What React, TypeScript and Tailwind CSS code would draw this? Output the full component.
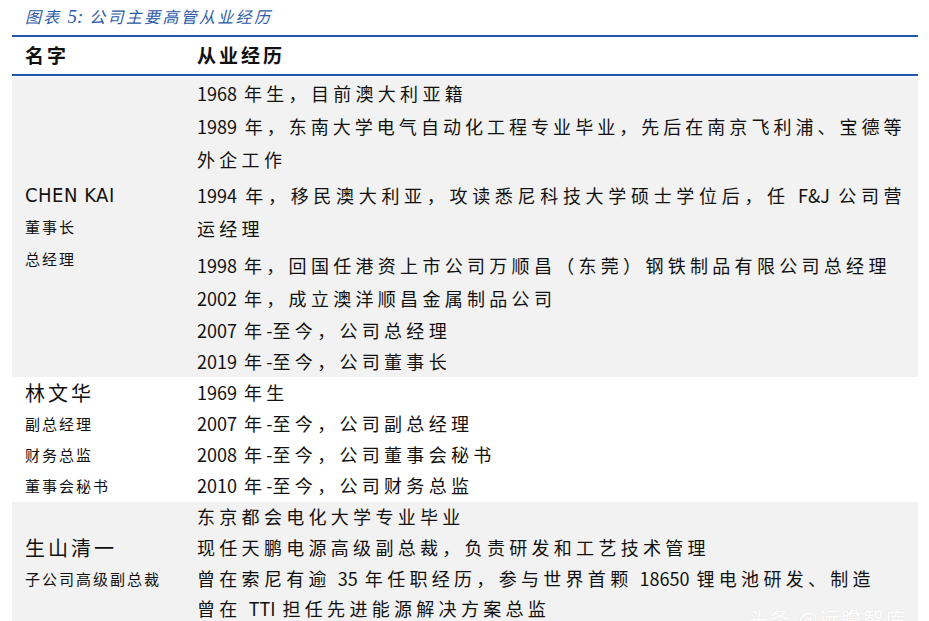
import React from 'react';

// 中英混排：中文字间距加宽，ASCII 段保持正常间距
function Mixed({ text }: { text: string }) {
  const parts = text.split(/([\x20-\x7E]+)/);
  return (
    <>
      {parts.map((p, i) =>
        /^[\x20-\x7E]+$/.test(p) ? (
          <span key={i} className="tracking-normal [word-spacing:3px]">
            {p}
          </span>
        ) : (
          <React.Fragment key={i}>{p}</React.Fragment>
        )
      )}
    </>
  );
}

// 两端对齐的折行首行
function Full({ text }: { text: string }) {
  return (
    <div className="w-[708px] whitespace-nowrap text-justify tracking-[3.4px] [text-align-last:justify]">
      <Mixed text={text} />
    </div>
  );
}

function Line({ text, className = '' }: { text: string; className?: string }) {
  return (
    <div className={`whitespace-nowrap ${className}`}>
      <Mixed text={text} />
    </div>
  );
}

export default function App() {
  return (
    <div className="relative h-[621px] w-[929px] overflow-hidden bg-white font-['Noto_Sans_CJK_SC',sans-serif] text-[#111]">
      {/* 标题 */}
      <div className="h-[35px] pl-[25px] pt-[4px] text-[16px] leading-[24px] italic tracking-[2.3px] text-[#2d5ba8]">
        图表 <span className="tracking-normal font-['Liberation_Serif',serif] text-[19px]">5:</span> 公司主要高管从业经历
      </div>

      <div className="mx-[12px] w-[906px]">
        <div className="border-t-2 border-[#2356ad]" />
        <div className="flex h-[37px] items-center text-[19px] font-bold tracking-[3px]">
          <div className="w-[185px] pl-[13px]">名字</div>
          <div>从业经历</div>
        </div>
        <div className="border-t-2 border-[#2356ad]" />

        {/* CHEN KAI */}
        <div className="mt-[1px] flex bg-[#f2f2f2] text-[18px] tracking-[4.3px]">
          <div className="flex w-[185px] flex-col justify-center pl-[13px]">
            <div className="font-['Liberation_Sans_Narrow','DejaVu_Sans_Condensed',sans-serif] text-[20px] leading-[32px] tracking-[0.5px]">
              CHEN KAI
            </div>
            <div className="text-[15px] leading-[32px] tracking-[2px]">董事长</div>
            <div className="text-[15px] leading-[32px] tracking-[2px]">总经理</div>
          </div>
          <div className="flex-1">
            <div className="leading-[33px]">
              <Line text="1968 年生，目前澳大利亚籍" />
            </div>
            <div className="leading-[33px]">
              <Full text="1989 年，东南大学电气自动化工程专业毕业，先后在南京飞利浦、宝德等" />
              <Line text="外企工作" />
            </div>
            <div className="mt-[3px] leading-[33px]">
              <Full text="1994 年，移民澳大利亚，攻读悉尼科技大学硕士学位后，任 F&J 公司营" />
              <Line text="运经理" />
            </div>
            <div className="mt-[4px] leading-[33px]">
              <Line text="1998 年，回国任港资上市公司万顺昌（东莞）钢铁制品有限公司总经理" />
            </div>
            <div className="leading-[33px]">
              <Line text="2002 年，成立澳洋顺昌金属制品公司" />
            </div>
            <Line className="leading-[31px]" text="2007 年-至今，公司总经理" />
            <Line className="leading-[31px]" text="2019 年-至今，公司董事长" />
          </div>
        </div>

        {/* 林文华 */}
        <div className="flex text-[18px] leading-[31px] tracking-[4.3px]">
          <div className="w-[185px] pl-[13px]">
            <div className="text-[20px] tracking-[3px]">林文华</div>
            <div className="text-[15px] tracking-[2px]">副总经理</div>
            <div className="text-[15px] tracking-[2px]">财务总监</div>
            <div className="text-[15px] tracking-[2px]">董事会秘书</div>
          </div>
          <div className="flex-1">
            <Line text="1969 年生" />
            <Line text="2007 年-至今，公司副总经理" />
            <Line text="2008 年-至今，公司董事会秘书" />
            <Line text="2010 年-至今，公司财务总监" />
          </div>
        </div>

        {/* 生山清一 */}
        <div className="mt-[1px] flex bg-[#f2f2f2] pb-[12px] text-[18px] leading-[31px] tracking-[4.3px]">
          <div className="w-[185px] pl-[13px] pt-[30px]">
            <div className="text-[20px] tracking-[3px]">生山清一</div>
            <div className="text-[15px] tracking-[2px]">子公司高级副总裁</div>
          </div>
          <div className="-mt-[1px] flex-1">
            <Line text="东京都会电化大学专业毕业" />
            <Line text="现任天鹏电源高级副总裁，负责研发和工艺技术管理" />
            <Line text="曾在索尼有逾 35 年任职经历，参与世界首颗 18650 锂电池研发、制造" />
            <Line className="leading-[29px]" text="曾在 TTI 担任先进能源解决方案总监" />
          </div>
        </div>
      </div>

      {/* 水印 */}
      <div className="absolute bottom-[-13px] left-[748px] whitespace-nowrap text-[20px] tracking-[2px] text-white [text-shadow:0_0_1px_#d8d8d8]">
        头条 @远瞻智库
      </div>
    </div>
  );
}
